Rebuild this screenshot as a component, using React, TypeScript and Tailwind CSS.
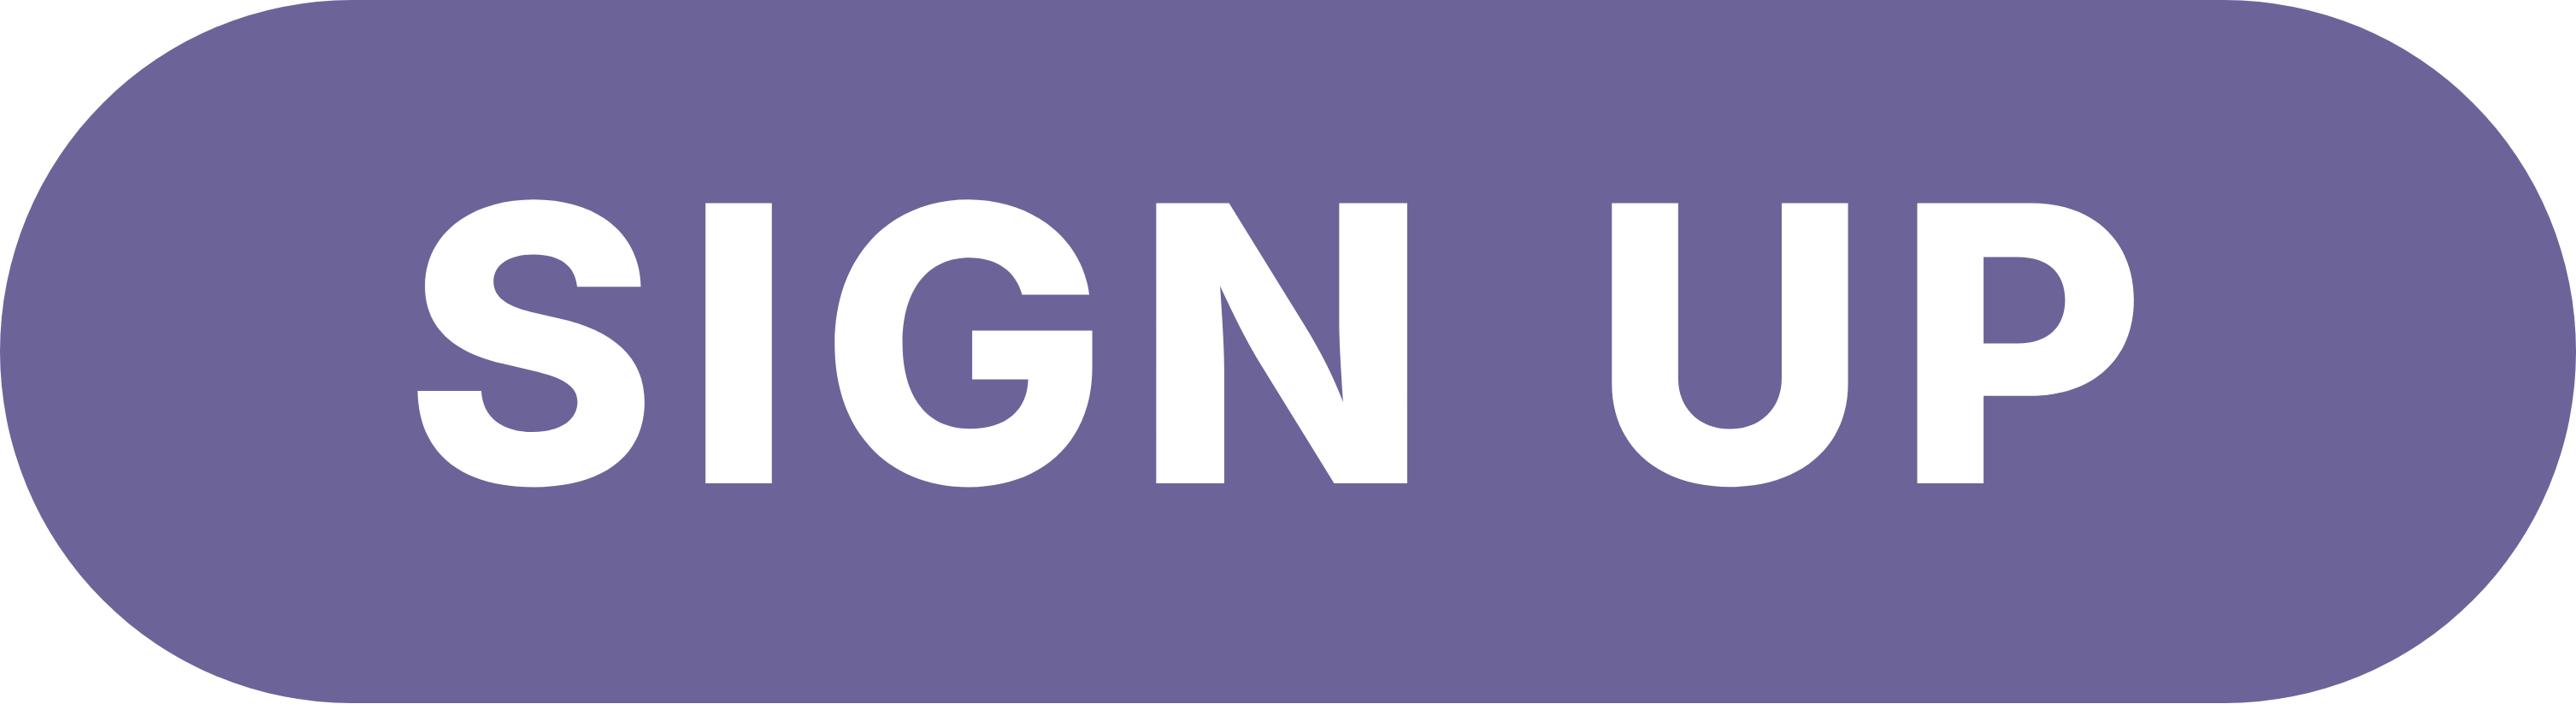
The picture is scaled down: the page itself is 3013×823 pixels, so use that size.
import React from "react";

export default function App() {
  return (
    <div className="w-full h-[823px] bg-white">
      <button
        type="button"
        className="flex h-[822px] w-full items-center justify-center rounded-full bg-[#6c6499] pb-[19px] text-white"
      >
        <span className="font-['Inter',sans-serif] text-[450px] font-extrabold leading-none tracking-[30px] [word-spacing:30px]">
          SIGN UP
        </span>
      </button>
    </div>
  );
}
